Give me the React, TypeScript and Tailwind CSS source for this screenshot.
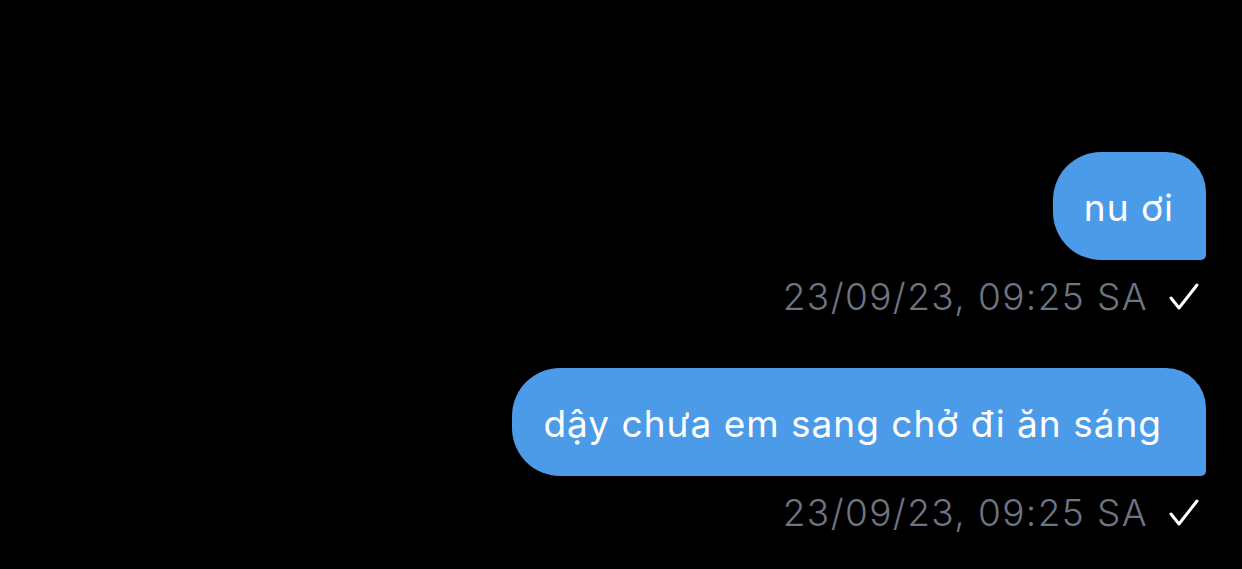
import React from "react";

type Message = {
  text: string;
  time: string;
  padRight: string;
};

const messages: Message[] = [
  { text: "nu ơi", time: "23/09/23, 09:25 SA", padRight: "pr-[32px]" },
  { text: "dậy chưa em sang chở đi ăn sáng", time: "23/09/23, 09:25 SA", padRight: "pr-[44px]" },
];

function Check() {
  return (
    <svg width="32" height="30" viewBox="0 0 32 30" fill="none" className="ml-[20px]">
      <path d="M3 16 L11 26 L29 3" stroke="#ffffff" strokeWidth="3" strokeLinecap="round" strokeLinejoin="round" />
    </svg>
  );
}

export default function App() {
  return (
    <div
      className="w-[1242px] h-[569px] bg-black overflow-hidden flex flex-col items-end pt-[152px] pr-[36px]"
      style={{ fontFamily: "Inter, 'Noto Sans', sans-serif" }}
    >
      {messages.map((m, i) => (
        <div key={i} className="flex flex-col items-end mb-[1px]">
          <div
            className={`h-[108px] flex items-center bg-[#4c9be8] text-white text-[37px] tracking-[1px] pl-[31px] ${m.padRight} rounded-tl-[48px] rounded-bl-[48px] rounded-tr-[40px] rounded-br-[5px]`}
          >
            <span className="leading-none pt-[2px]">{m.text}</span>
          </div>
          <div className="h-[107px] flex items-start pt-[15px] pr-[6px]">
            <span className="text-[37px] leading-[44px] tracking-[1.4px] text-[#6e7482] font-light">{m.time}</span>
            <div className="h-[44px] flex items-center">
              <Check />
            </div>
          </div>
        </div>
      ))}
    </div>
  );
}
